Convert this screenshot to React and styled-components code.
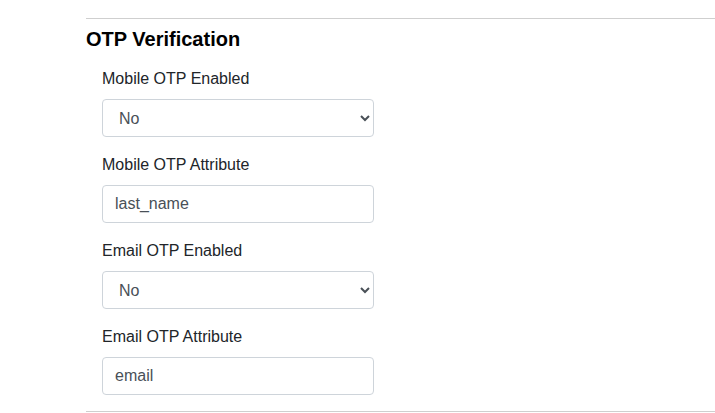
import React from 'react';
import styled, { createGlobalStyle } from 'styled-components';

const Global = createGlobalStyle`
  body {
    margin: 0;
    background: #fff;
    font-family: "Liberation Sans", Arial, sans-serif;
    color: #212529;
  }
`;

const Section = styled.section`
  margin-left: 86px;
  padding-top: 18px;
`;

const Rule = styled.hr`
  margin: 0;
  border: 0;
  border-top: 1px solid #cfcfcf;
`;

const Title = styled.h2`
  margin: 8px 0 16px;
  font-size: 20px;
  line-height: 24px;
  font-weight: bold;
  color: #000;
`;

const Fields = styled.div`
  padding-left: 16px;
`;

const Group = styled.div`
  margin-bottom: 16px;
  width: 272px;
`;

const Label = styled.label`
  display: block;
  font-size: 16px;
  line-height: 24px;
  margin-bottom: 8px;
`;

const fieldBase = `
  display: block;
  box-sizing: border-box;
  width: 100%;
  height: 38px;
  padding: 6px 12px;
  font-family: "Liberation Sans", Arial, sans-serif;
  font-size: 16px;
  line-height: 24px;
  color: #495057;
  background: #fff;
  border: 1px solid #ced4da;
  border-radius: 4px;
  outline: none;
`;

const Select = styled.select`
  ${fieldBase}
`;

const Input = styled.input`
  ${fieldBase}
`;

const fields = [
  { label: 'Mobile OTP Enabled', type: 'select', value: 'No' },
  { label: 'Mobile OTP Attribute', type: 'input', value: 'last_name' },
  { label: 'Email OTP Enabled', type: 'select', value: 'No' },
  { label: 'Email OTP Attribute', type: 'input', value: 'email' },
];

export default function App() {
  return (
    <>
      <Global />
      <Section>
        <Rule />
        <Title>OTP Verification</Title>
        <Fields>
          {fields.map((f) => (
            <Group key={f.label}>
              <Label>{f.label}</Label>
              {f.type === 'select' ? (
                <Select defaultValue={f.value}>
                  <option>No</option>
                  <option>Yes</option>
                </Select>
              ) : (
                <Input type="text" defaultValue={f.value} />
              )}
            </Group>
          ))}
        </Fields>
        <Rule />
      </Section>
    </>
  );
}
